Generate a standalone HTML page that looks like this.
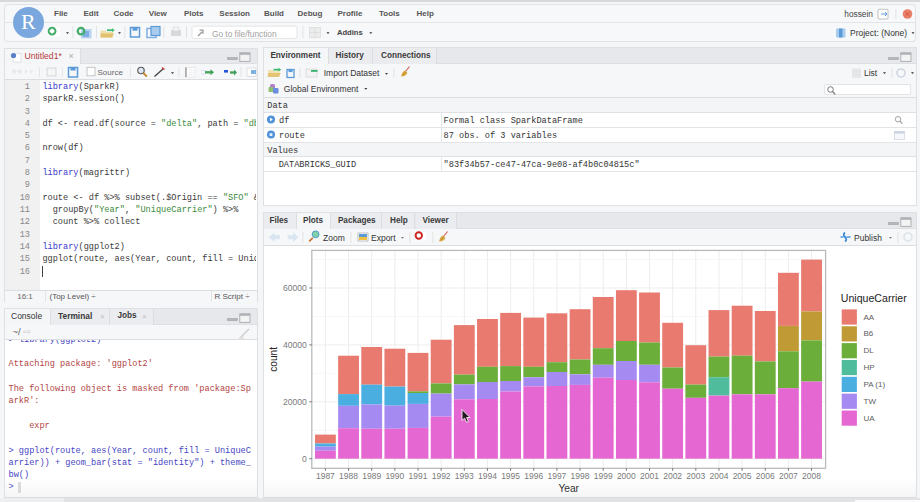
<!DOCTYPE html>
<html><head><meta charset="utf-8">
<style>
*{margin:0;padding:0;box-sizing:border-box}
html,body{width:920px;height:502px;overflow:hidden;background:#f5f6f8;font-family:"Liberation Sans",sans-serif;}
.a{position:absolute}
.t{position:absolute;white-space:nowrap;font-size:8px;line-height:10px;color:#333}
.mono{font-family:"Liberation Mono",monospace;font-size:8.6px;line-height:12.32px;white-space:pre;color:#3a3a3a}
.pane{position:absolute;background:#fff;border:1px solid #dfe0e3}
.tabbar{position:absolute;background:#e7e8eb;border-bottom:1px solid #dedfe2}
.tab{position:absolute;top:0;height:100%;background:#ebecef;border-right:1px solid #dcdde0}
.tab.act{background:#f5f6f8}
.tb{position:absolute;background:#f6f7f9;border-bottom:1px solid #dcdde0}
.kw{color:#3a3acd}
.st{color:#3b8a3b}
.red{color:#b24545}
.blu{color:#4646c4}
.sep{position:absolute;width:1px;background:#d5d6da}
</style></head><body><div id="wrap" style="position:absolute;left:0;top:0;width:920px;height:502px">
<!-- top band -->
<div class="a" style="left:0;top:0;width:920px;height:2px;background:#d8d9dc"></div>
<!-- main toolbar frame -->
<div class="a" style="left:4px;top:4px;width:912px;height:37.5px;background:#f7f8fa;border:1px solid #e1e2e5;border-radius:3px"></div>
<div class="a" style="left:5px;top:22px;width:910px;height:1px;background:#e4e5e8"></div>
<!-- R logo -->
<div class="a" style="left:12.6px;top:6.9px;width:31px;height:31px;border-radius:50%;background:#7aa7dd"></div>
<div class="t" style="left:12.3px;top:8.5px;width:32px;text-align:center;font-family:'Liberation Serif',serif;font-size:22px;line-height:26px;color:#fff">R</div>
<!-- menu -->
<div class="t" style="left:54px;top:8.5px;font-weight:bold;color:#555">File</div>
<div class="t" style="left:83.5px;top:8.5px;font-weight:bold;color:#555">Edit</div>
<div class="t" style="left:113.5px;top:8.5px;font-weight:bold;color:#555">Code</div>
<div class="t" style="left:148.7px;top:8.5px;font-weight:bold;color:#555">View</div>
<div class="t" style="left:183.9px;top:8.5px;font-weight:bold;color:#555">Plots</div>
<div class="t" style="left:219.3px;top:8.5px;font-weight:bold;color:#555">Session</div>
<div class="t" style="left:264px;top:8.5px;font-weight:bold;color:#555">Build</div>
<div class="t" style="left:297.5px;top:8.5px;font-weight:bold;color:#555">Debug</div>
<div class="t" style="left:337.5px;top:8.5px;font-weight:bold;color:#555">Profile</div>
<div class="t" style="left:379px;top:8.5px;font-weight:bold;color:#555">Tools</div>
<div class="t" style="left:416.5px;top:8.5px;font-weight:bold;color:#555">Help</div>
<div class="t" style="left:844.3px;top:9.4px;color:#444;font-size:8.3px">hossein</div>
<!-- toolbar -->

<svg class="a" style="left:0;top:0" width="920" height="45">
 <!-- new file: green plus in white doc -->
 <rect x="49.6" y="27.4" width="10.8" height="8.7" fill="#fff"/>
 <circle cx="52.1" cy="31.1" r="3.3" fill="none" stroke="#43ad6a" stroke-width="2.2"/>
 <path d="M52.1 28.6v5M49.6 31.1h5" stroke="#fff" stroke-width="1"/>
 <path d="M66 32.3h3l-1.5 1.8z" fill="#333"/>
 <rect x="72.5" y="26" width="0.8" height="12" fill="#dcdcdc"/>
 <!-- new project -->
 <rect x="81" y="29" width="10.5" height="9.4" fill="#b7d3ef"/>
 <rect x="83" y="31" width="6" height="6" fill="#7eaee3"/>
 <circle cx="81" cy="31.1" r="3.3" fill="none" stroke="#43ad6a" stroke-width="2.2"/>
 <rect x="96" y="26" width="0.8" height="12" fill="#dcdcdc"/>
 <!-- open -->
 <path d="M100.5 30.5 h5 l1 1.5 h6.5 v5.5 h-12.5z" fill="#efe0a8"/>
 <path d="M100.5 33.5 h13.5 l-2 4 h-11.5z" fill="#e2c270"/>
 <path d="M107 30.2h5.5" stroke="#3dbb6a" stroke-width="1.8"/><path d="M112 28.3l2.8 1.9-2.8 1.9z" fill="#3dbb6a"/>
 <path d="M118 32.3h3l-1.5 1.8z" fill="#333"/>
 <rect x="124.5" y="26" width="0.8" height="12" fill="#dcdcdc"/>
 <!-- save -->
 <rect x="130.5" y="27.5" width="9" height="9.5" fill="none" stroke="#5b9ad8" stroke-width="1.5"/>
 <rect x="132.5" y="27.5" width="5" height="3.2" fill="#5b9ad8"/>
 <!-- save all -->
 <rect x="147" y="28.5" width="9" height="9" fill="none" stroke="#7fb0e3" stroke-width="1.5"/>
 <rect x="151" y="26.5" width="9" height="9" fill="#a9cbed" stroke="#5b9ad8" stroke-width="1.2"/>
 <rect x="163.5" y="26" width="0.8" height="12" fill="#dcdcdc"/>
 <!-- print -->
 <rect x="171" y="30" width="10" height="6" rx="1" fill="#d9d9dc"/>
 <rect x="173" y="27" width="6" height="4" fill="#f2f2f2" stroke="#cfcfcf" stroke-width="0.5"/>
 <rect x="186" y="26" width="0.8" height="12" fill="#dcdcdc"/>
 <!-- goto box -->
 <rect x="192" y="26.2" width="105" height="12.3" rx="2" fill="#fff" stroke="#dedfe2" stroke-width="0.8"/>
 <path d="M198 36 l4 -4 M199.5 30.2 h3.5 v3.5" fill="none" stroke="#9a9a9a" stroke-width="1.3"/>
 <rect x="302.5" y="26" width="0.8" height="12" fill="#dcdcdc"/>
 <!-- grid icon -->
 <rect x="309.5" y="27.5" width="11" height="10" fill="#ececec" stroke="#d6d6d6" stroke-width="0.6"/>
 <path d="M315 27.5v10M309.5 32.5h11" stroke="#d6d6d6" stroke-width="0.6"/>
 <path d="M326.5 32.3h3l-1.5 1.8z" fill="#333"/>
 <path d="M369.3 32.3h3l-1.5 1.8z" fill="#333"/>
 <!-- right side -->
 <rect x="878" y="9.3" width="10" height="9.7" rx="1" fill="#fff" stroke="#b0b0b0" stroke-width="0.8"/>
 <path d="M881 14h6M885 12l2 2-2 2" fill="none" stroke="#5b9ad8" stroke-width="1"/>
 <rect x="895.5" y="9" width="0.8" height="10" fill="#d9d9d9"/>
 <circle cx="907.5" cy="14" r="4.8" fill="#e8806a"/>
 <path d="M905.2 11.7l4.6 4.6M909.8 11.7l-4.6 4.6" stroke="#d9533c" stroke-width="1"/>
 <rect x="836" y="28.5" width="9.5" height="9" rx="1" fill="#a8cdee"/>
 <rect x="839" y="28.5" width="3.5" height="9" fill="#5a9bd8"/>
 <path d="M911.5 32.3h3l-1.5 1.8z" fill="#333"/>
</svg>
<div class="t" style="left:212px;top:28.5px;color:#a0a0a0;font-size:8.3px">Go to file/function</div>
<div class="t" style="left:337px;top:28.3px;font-size:7.6px;font-weight:bold;color:#444">Addins</div>
<div class="t" style="left:850px;top:27.5px;font-size:8.5px;color:#333">Project: (None)</div>


<!-- ================= LEFT: editor ================= -->
<div class="pane" style="left:4px;top:47.5px;width:253.5px;height:254.5px;background:#f7f8fa"></div>
<div class="tabbar" style="left:5px;top:48.5px;width:251.5px;height:15.5px"></div>
<div class="tab act" style="left:5px;top:48.5px;width:75.5px;height:15.5px"></div>

<div class="tb" style="left:5px;top:64px;width:251.5px;height:15.5px"></div>
<div class="a" style="left:5px;top:79.5px;width:251.5px;height:210px;background:#fff"></div>
<div class="a" style="left:5px;top:79.5px;width:34.5px;height:210px;background:#f1f1f2"></div>
<div class="a" style="left:5px;top:289.5px;width:251.5px;height:12.5px;background:#f6f7f9;border-top:1px solid #dcdde0"></div>
<div class="t" style="left:24.5px;top:51px;color:#b43a3a;font-size:8.6px">Untitled1*</div>
<div class="t" style="left:68.5px;top:51px;color:#aaa;font-size:9px">×</div>
<svg class="a" style="left:0;top:40px" width="260" height="40">
 <rect x="13" y="13.5" width="8" height="8.5" fill="#fff" stroke="#ccc" stroke-width="0.5"/>
 <circle cx="13.5" cy="15.5" r="2.6" fill="#5a7fc8"/>
 <path d="M12 31.5l3-2.5v5zM19 29v5l3-2.5z M15 31.5h4" fill="#e8eaef" stroke="#e0e2e6" stroke-width="0.6"/>
 <path d="M25 29v5l3-2.5zM30 29v5l3-2.5z" fill="#e8eaef"/>
 <rect x="39" y="27" width="0.8" height="10" fill="#e0e0e0"/>
 <rect x="47" y="28" width="9" height="8" fill="#f5f5f5" stroke="#c8c8c8" stroke-width="0.7"/>
 <rect x="62" y="27" width="0.8" height="10" fill="#e0e0e0"/>
 <rect x="68.5" y="27.5" width="9" height="9.5" fill="none" stroke="#5b9ad8" stroke-width="1.5"/>
 <rect x="70.5" y="27.5" width="5" height="3" fill="#5b9ad8"/>
 <rect x="87" y="27.3" width="8" height="8.5" fill="#fff" stroke="#b9b9b9" stroke-width="0.8"/>
 <rect x="130" y="27" width="0.8" height="10" fill="#e0e0e0"/>
 <circle cx="141" cy="30.5" r="3.2" fill="#dfe9f3" stroke="#555" stroke-width="1.1"/>
 <path d="M143.3 33l3.5 3.5" stroke="#c9862b" stroke-width="1.8"/>
 <path d="M154.5 36.5l9 -8" stroke="#444" stroke-width="1.4"/>
 <path d="M162 27.5l2.5 2" stroke="#d8433d" stroke-width="1.6"/>
 <path d="M171 32.3h3l-1.5 1.8z" fill="#333"/>
 <rect x="178.5" y="27" width="0.8" height="10" fill="#e0e0e0"/>
 <rect x="185.5" y="27.5" width="9.5" height="9.5" fill="#fff" stroke="#ddd" stroke-width="0.6"/>
 <rect x="185" y="27.5" width="1.8" height="9.5" fill="#aaa"/>
 <path d="M188.5 30h5M188.5 32.3h5M188.5 34.6h5" stroke="#e2e2e2" stroke-width="0.7"/>
 <path d="M201 30.5h5M201 34h5" stroke="#d6dcf0" stroke-width="0.9"/>
 <path d="M205 32.3h6" stroke="#4aa35a" stroke-width="2.4"/><path d="M210.5 29.3l3.5 3-3.5 3z" fill="#3fa05a"/>
 <rect x="224" y="30" width="4" height="2.6" fill="#2255dd"/><path d="M230 32.5h4.5" stroke="#4aa35a" stroke-width="2.4"/><path d="M234 29.5l3 3-3 3z" fill="#3fa05a"/>
 <rect x="240.5" y="27" width="0.8" height="10" fill="#e0e0e0"/>
 <rect x="247" y="28" width="9" height="8.5" fill="#fff" stroke="#ccc" stroke-width="0.6"/>
 <rect x="251" y="30" width="5" height="4" fill="#7faee0"/>
</svg>
<div class="t" style="left:97.5px;top:67.5px;color:#666;font-size:8px">Source</div>
<svg class="a" style="left:226.5px;top:51px" width="26" height="14">
 <rect x="0.5" y="6.5" width="10" height="2.2" fill="#b5b6b9" stroke="#9c9da0" stroke-width="0.5"/>
 <rect x="12.8" y="1.8" width="10.2" height="8.6" fill="#f3f3f4" stroke="#a9aaad" stroke-width="0.9"/>
 <rect x="12.8" y="1.8" width="10.2" height="2" fill="#b0b1b4"/>
</svg>
<div class="a mono" style="left:5px;top:80.9px;width:25px;text-align:right;color:#888">1
2
3
4
5
6
7
8
9
10
11
12
13
14
15
16
</div><div class="a mono" style="left:42.4px;top:80.9px;width:214px;overflow:hidden"><span class="kw">library</span>(SparkR)
sparkR.session()

df &lt;- read.df(source = <span class="st">"delta"</span>, path = <span class="st">"db</span>

nrow(df)

<span class="kw">library</span>(magrittr)

route &lt;- df %&gt;% subset(.$Origin == <span class="st">"SFO"</span> &amp;
  groupBy(<span class="st">"Year"</span>, <span class="st">"UniqueCarrier"</span>) %&gt;%
  count %&gt;% collect

<span class="kw">library</span>(ggplot2)
ggplot(route, aes(Year, count, fill = UniqueC
</div><div class="a" style="left:41.5px;top:266px;width:1.2px;height:10.5px;background:#444"></div><svg class="a" style="left:0;top:289px" width="260" height="14"><rect x="45" y="1" width="0.8" height="12" fill="#dedfe2"/><rect x="211" y="1" width="0.8" height="12" fill="#dedfe2"/></svg>
<div class="t" style="left:5px;top:291.5px;width:40px;text-align:center;font-size:8px;color:#666">16:1</div>
<div class="t" style="left:49.5px;top:291.5px;font-size:8px;color:#555">(Top Level) ÷</div>
<div class="t" style="left:214.5px;top:291.5px;font-size:8px;color:#555">R Script ÷</div>


<!-- ================= LEFT: console ================= -->
<div class="pane" style="left:4px;top:308px;width:253.5px;height:189.5px"></div>

<div class="tabbar" style="left:5px;top:309px;width:251.5px;height:16px"></div>
<div class="tab act" style="left:5px;top:309px;width:46px;height:16px"></div>
<div class="tab" style="left:51px;top:309px;width:59px;height:16px"></div>
<div class="tab" style="left:110px;top:309px;width:44px;height:16px"></div>
<div class="t" style="left:11px;top:311.3px;font-size:8.5px;color:#333">Console</div>
<div class="t" style="left:58px;top:311.3px;font-size:8.4px;font-weight:bold;color:#3a3a3a">Terminal</div>
<div class="t" style="left:100px;top:312px;font-size:8px;color:#bbb">×</div>
<div class="t" style="left:117.5px;top:311.3px;font-size:8.2px;font-weight:bold;color:#3a3a3a">Jobs</div>
<div class="t" style="left:142px;top:312px;font-size:8px;color:#bbb">×</div>
<svg class="a" style="left:226.5px;top:311.5px" width="26" height="14">
 <rect x="0.5" y="6.5" width="10" height="2.2" fill="#b5b6b9" stroke="#9c9da0" stroke-width="0.5"/>
 <rect x="12.8" y="1.8" width="10.2" height="8.6" fill="#f3f3f4" stroke="#a9aaad" stroke-width="0.9"/>
 <rect x="12.8" y="1.8" width="10.2" height="2" fill="#b0b1b4"/>
</svg>
<div class="tb" style="left:5px;top:325px;width:251.5px;height:15px"></div>
<div class="t" style="left:12.5px;top:327.3px;font-size:9.6px;color:#666">~/ <span style="color:#ccc">⇨</span></div>
<svg class="a" style="left:238px;top:327px" width="14" height="12"><path d="M2 11l9-9" stroke="#ccc" stroke-width="1.2"/><path d="M1 11h5" stroke="#ddd" stroke-width="1.5"/></svg>
<div class="a" style="left:5px;top:340px;width:251.5px;height:157px;background:#fff;overflow:hidden"></div>
<div class="a" style="left:5px;top:340px;width:251.5px;height:157px;overflow:hidden"><div class="a mono" style="left:3.5px;top:-6.3px"><span class="blu">&gt; library(ggplot2)</span>

<span class="red">Attaching package: 'ggplot2'</span>

<span class="red">The following object is masked from 'package:Sp
arkR':</span>

<span class="red">    expr</span>

<span class="blu">&gt; ggplot(route, aes(Year, count, fill = UniqueC
arrier)) + geom_bar(stat = "identity") + theme_
bw()
&gt; </span></div></div><div class="a" style="left:18.3px;top:481.5px;width:2.4px;height:11px;background:#dcdcdc"></div>

<!-- ================= RIGHT: env ================= -->
<div class="pane" style="left:263px;top:47px;width:653.5px;height:158.5px"></div>

<div class="tabbar" style="left:264px;top:48px;width:651.5px;height:15.8px"></div>
<div class="tab act" style="left:264px;top:48px;width:65.3px;height:15.8px"></div>
<div class="tab" style="left:329.3px;top:48px;width:43.4px;height:15.8px"></div>
<div class="tab" style="left:372.7px;top:48px;width:64px;height:15.8px"></div>
<div class="t" style="left:270.4px;top:51px;font-size:8.2px;font-weight:bold;color:#3a3a3a">Environment</div>
<div class="t" style="left:335.5px;top:51px;font-size:8.2px;font-weight:bold;color:#3a3a3a">History</div>
<div class="t" style="left:381px;top:51px;font-size:8.2px;font-weight:bold;color:#3a3a3a">Connections</div>
<svg class="a" style="left:887.5px;top:51px" width="26" height="14">
 <rect x="0.5" y="6.5" width="10" height="2.2" fill="#b5b6b9" stroke="#9c9da0" stroke-width="0.5"/>
 <rect x="12.8" y="1.8" width="10.2" height="8.6" fill="#f3f3f4" stroke="#a9aaad" stroke-width="0.9"/>
 <rect x="12.8" y="1.8" width="10.2" height="2" fill="#b0b1b4"/>
</svg>
<div class="tb" style="left:264px;top:63.8px;width:651.5px;height:16.3px"></div>
<div class="a" style="left:264px;top:79.3px;width:651.5px;height:18.6px;background:#f6f7f9;border-bottom:1px solid #dcdde0"></div>
<svg class="a" style="left:0;top:57.5px" width="920" height="40">
 <path d="M268 12 h4.5 l1 1.3 h6 v5.5 h-11.5z" fill="#efe2ae"/>
 <path d="M267.8 15 h13 l-2 4 h-11z" fill="#e3c575"/>
 <path d="M273.5 11.7h5.5" stroke="#3dbb6a" stroke-width="1.8"/><path d="M278.5 9.8l2.8 1.9-2.8 1.9z" fill="#3dbb6a"/>
 <rect x="287" y="11.5" width="7" height="8" fill="none" stroke="#5b9ad8" stroke-width="1.3"/>
 <rect x="288.5" y="11.5" width="4" height="2.6" fill="#5b9ad8"/>
 <rect x="299.5" y="10" width="0.8" height="10" fill="#dedede"/>
 <rect x="306" y="11" width="11" height="8" fill="#f3f3f3" stroke="#ccc" stroke-width="0.6"/>
 <rect x="311" y="12" width="6.5" height="1.8" fill="#34b06a"/>
 <path d="M385 15h3l-1.5 1.8z" fill="#333"/>
 <rect x="393.5" y="10" width="0.8" height="10" fill="#dedede"/>
 <path d="M409.5 8.5 l-4 5" stroke="#d25a4a" stroke-width="1.1"/>
 <path d="M401 18.5 q0.5 -4 3.5 -6 l3 2.5 q-2 3.5 -6.5 3.5z" fill="#d8a840"/>
 <path d="M403 17 l3 -3.5" stroke="#b07f2a" stroke-width="0.7"/>
 <rect x="852.5" y="11" width="8" height="8.5" fill="#e9e9ea" stroke="#dcdcdc" stroke-width="0.5"/>
 <path d="M852.5 13.8h8M852.5 16.6h8" stroke="#d8d8d8" stroke-width="0.5"/>
 <path d="M883 14.3h3l-1.5 1.8z" fill="#333"/>
 <rect x="891.5" y="10" width="0.8" height="10" fill="#dedede"/>
 <circle cx="901" cy="15" r="4" fill="none" stroke="#cfd6e2" stroke-width="1.6"/>
 <path d="M911 14.3h3l-1.5 1.8z" fill="#333"/>
 <!-- global env icon -->
 <rect x="270" y="26" width="5" height="6" rx="1.5" fill="#b17ed0"/>
 <rect x="268.5" y="29" width="5" height="5" rx="1" fill="#8bc170"/>
 <rect x="273" y="30" width="5.5" height="5.5" rx="1" fill="#6b8ee0"/>
 <path d="M364.3 30h3l-1.5 1.8z" fill="#333"/>
</svg>
<div class="t" style="left:323.7px;top:67.5px;font-size:8.5px;color:#333">Import Dataset</div>
<div class="t" style="left:864px;top:67.5px;font-size:8.5px;color:#333">List</div>
<div class="t" style="left:283.8px;top:83.5px;font-size:8.5px;color:#333">Global Environment</div>
<div class="a" style="left:823.8px;top:83.8px;width:87.5px;height:11.3px;background:#fff;border:1px solid #e2e3e6;border-radius:2px"></div>
<svg class="a" style="left:826px;top:84.5px" width="12" height="11"><circle cx="4.5" cy="4.5" r="2.8" fill="none" stroke="#777" stroke-width="1"/><path d="M6.5 6.5l2.8 2.8" stroke="#777" stroke-width="1.2"/></svg>
<div class="a" style="left:264px;top:97.9px;width:651.5px;height:15.3px;background:#f4f5f7;border-bottom:1px solid #e0e1e4"></div>
<div class="a" style="left:264px;top:113.2px;width:651.5px;height:14.8px;background:#fff;border-bottom:1px solid #e3e4e7"></div>
<div class="a" style="left:264px;top:127.8px;width:651.5px;height:15.2px;background:#fff;border-bottom:1px solid #e3e4e7"></div>
<div class="a" style="left:264px;top:143px;width:651.5px;height:14.2px;background:#f4f5f7;border-bottom:1px solid #e0e1e4"></div>
<div class="a" style="left:264px;top:157.2px;width:651.5px;height:14.5px;background:#fff;border-bottom:1px solid #e3e4e7"></div>
<div class="a" style="left:440.5px;top:112.3px;width:1px;height:30.7px;background:#e6e7ea"></div>
<div class="a" style="left:440.5px;top:157.2px;width:1px;height:14.5px;background:#e6e7ea"></div>
<svg class="a" style="left:260px;top:110px" width="660" height="40">
 <circle cx="11" cy="9.5" r="4" fill="#4e92da"/>
 <path d="M10 7.6v3.8l2.8-1.9z" fill="#fff"/>
 <circle cx="11" cy="24.6" r="4" fill="#4e92da"/>
 <rect x="9.6" y="23.2" width="2.8" height="2.8" fill="#e8f0fa"/>
 <circle cx="638" cy="9.2" r="2.7" fill="none" stroke="#999" stroke-width="0.9"/>
 <path d="M640 11.2l2.4 2.4" stroke="#999" stroke-width="1.1"/>
 <rect x="634.5" y="21.5" width="10" height="8" fill="#f5f7fb" stroke="#c9d3e0" stroke-width="0.7"/>
 <rect x="634.5" y="21.5" width="10" height="2" fill="#c9d3e0"/>
</svg>
<div class="a mono" style="left:267.3px;top:99.8px;color:#333">Data</div>
<div class="a mono" style="left:279px;top:114.8px;color:#333">df</div>
<div class="a mono" style="left:279px;top:129.8px;color:#333">route</div>
<div class="a mono" style="left:267.3px;top:144.8px;color:#333">Values</div>
<div class="a mono" style="left:278.7px;top:159.3px;color:#333">DATABRICKS_GUID</div>
<div class="a mono" style="left:443.6px;top:114.8px;color:#333">Formal class SparkDataFrame</div>
<div class="a mono" style="left:443.6px;top:129.8px;color:#333">87 obs. of 3 variables</div>
<div class="a mono" style="left:443.6px;top:159.3px;color:#333">"83f34b57-ce47-47ca-9e08-af4b0c04815c"</div>


<!-- ================= RIGHT: plots ================= -->
<div class="pane" style="left:263px;top:212px;width:653.5px;height:285.5px"></div>

<div class="tabbar" style="left:264px;top:212.8px;width:651.5px;height:16.2px"></div>
<div class="tab" style="left:264px;top:212.8px;width:32.8px;height:16.2px"></div>
<div class="tab act" style="left:296.8px;top:212.8px;width:34.2px;height:16.2px"></div>
<div class="tab" style="left:331px;top:212.8px;width:51.4px;height:16.2px"></div>
<div class="tab" style="left:382.4px;top:212.8px;width:33.1px;height:16.2px"></div>
<div class="tab" style="left:415.5px;top:212.8px;width:41.1px;height:16.2px"></div>
<div class="t" style="left:269.4px;top:216px;font-size:8.2px;font-weight:bold;color:#3a3a3a">Files</div>
<div class="t" style="left:303px;top:216px;font-size:8.2px;font-weight:bold;color:#3a3a3a">Plots</div>
<div class="t" style="left:337.9px;top:216px;font-size:8.2px;font-weight:bold;color:#3a3a3a">Packages</div>
<div class="t" style="left:390px;top:216px;font-size:8.2px;font-weight:bold;color:#3a3a3a">Help</div>
<div class="t" style="left:422.4px;top:216px;font-size:8.2px;font-weight:bold;color:#3a3a3a">Viewer</div>
<svg class="a" style="left:887.5px;top:216px" width="26" height="14">
 <rect x="0.5" y="6.5" width="10" height="2.2" fill="#b5b6b9" stroke="#9c9da0" stroke-width="0.5"/>
 <rect x="12.8" y="1.8" width="10.2" height="8.6" fill="#f3f3f4" stroke="#a9aaad" stroke-width="0.9"/>
 <rect x="12.8" y="1.8" width="10.2" height="2" fill="#b0b1b4"/>
</svg>
<div class="tb" style="left:264px;top:229px;width:651.5px;height:17px"></div>
<div class="a" style="left:264px;top:246px;width:651.5px;height:251px;background:#fff"></div>
<svg class="a" style="left:0;top:225px" width="920" height="22">
 <path d="M269.5 12.2l4.5-4v2.5h5.5v3h-5.5v2.5z" fill="#d9e6f2" stroke="#d9e6f2" stroke-width="1" stroke-linejoin="round"/>
 <path d="M298 12.2l-4.5-4v2.5h-5.5v3h5.5v2.5z" fill="#d9e6f2" stroke="#d9e6f2" stroke-width="1" stroke-linejoin="round"/>
 <rect x="302.5" y="7" width="0.8" height="11" fill="#dedede"/>
 <path d="M312.8 12.8l-3.6 3.6" stroke="#c9773a" stroke-width="1.8"/>
 <circle cx="315.6" cy="9.3" r="3.4" fill="#7fd3a8" stroke="#4a90c8" stroke-width="0.9"/>
 <rect x="350.5" y="7" width="0.8" height="11" fill="#dedede"/>
 <rect x="358" y="8" width="10" height="8" fill="#fff" stroke="#999" stroke-width="0.6"/>
 <rect x="359" y="12" width="8" height="3" fill="#f0c040"/>
 <rect x="359" y="9" width="8" height="3" fill="#5b9ad8"/>
 <path d="M401 12h3l-1.5 1.8z" fill="#777"/>
 <rect x="409.5" y="7" width="0.8" height="11" fill="#dedede"/>
 <rect x="419" y="7.5" width="7" height="8" fill="#fff"/>
 <circle cx="418.8" cy="10.5" r="3.2" fill="#fff" stroke="#cc2222" stroke-width="1.9"/>
 <rect x="432.5" y="7" width="0.8" height="11" fill="#dedede"/>
 <path d="M447.5 6.5 l-4 5" stroke="#d25a4a" stroke-width="1.1"/>
 <path d="M439 16.5 q0.5 -4 3.5 -6 l3 2.5 q-2 3.5 -6.5 3.5z" fill="#d8a840"/>
 <path d="M441 15 l3 -3.5" stroke="#b07f2a" stroke-width="0.7"/>
 <path d="M840.5 12 h3 M846.5 12 h4" stroke="#4d9ae0" stroke-width="1.6"/>
 <path d="M845 7.5 q-2.5 2 0 4.5 q2.5 2.5 0 4.5" fill="none" stroke="#3d8ad6" stroke-width="1.8"/>
 <path d="M889 12h3l-1.5 1.8z" fill="#777"/>
 <rect x="897.5" y="7" width="0.8" height="11" fill="#dedede"/>
 <circle cx="908" cy="12" r="4" fill="none" stroke="#dde3ea" stroke-width="1.6"/>
</svg>
<div class="t" style="left:323px;top:232.5px;font-size:8.5px;color:#333">Zoom</div>
<div class="t" style="left:371px;top:232.5px;font-size:8.5px;color:#333">Export</div>
<div class="t" style="left:854px;top:232.5px;font-size:8.5px;color:#333">Publish</div>

<svg width="920" height="502" style="position:absolute;left:0;top:0">
<rect x="311.8" y="250.4" width="513.8" height="217.9" fill="#ffffff"/>
<line x1="311.8" x2="825.6" y1="430.25" y2="430.25" stroke="#f4f4f4" stroke-width="0.7"/>
<line x1="311.8" x2="825.6" y1="373.35" y2="373.35" stroke="#f4f4f4" stroke-width="0.7"/>
<line x1="311.8" x2="825.6" y1="316.45" y2="316.45" stroke="#f4f4f4" stroke-width="0.7"/>
<line x1="311.8" x2="825.6" y1="259.55" y2="259.55" stroke="#f4f4f4" stroke-width="0.7"/>
<line x1="311.8" x2="825.6" y1="458.70" y2="458.70" stroke="#ededed" stroke-width="1"/>
<line x1="311.8" x2="825.6" y1="401.80" y2="401.80" stroke="#ededed" stroke-width="1"/>
<line x1="311.8" x2="825.6" y1="344.90" y2="344.90" stroke="#ededed" stroke-width="1"/>
<line x1="311.8" x2="825.6" y1="288.00" y2="288.00" stroke="#ededed" stroke-width="1"/>
<line x1="325.40" x2="325.40" y1="250.4" y2="468.3" stroke="#ededed" stroke-width="1"/>
<line x1="348.55" x2="348.55" y1="250.4" y2="468.3" stroke="#ededed" stroke-width="1"/>
<line x1="371.70" x2="371.70" y1="250.4" y2="468.3" stroke="#ededed" stroke-width="1"/>
<line x1="394.85" x2="394.85" y1="250.4" y2="468.3" stroke="#ededed" stroke-width="1"/>
<line x1="418.00" x2="418.00" y1="250.4" y2="468.3" stroke="#ededed" stroke-width="1"/>
<line x1="441.15" x2="441.15" y1="250.4" y2="468.3" stroke="#ededed" stroke-width="1"/>
<line x1="464.30" x2="464.30" y1="250.4" y2="468.3" stroke="#ededed" stroke-width="1"/>
<line x1="487.45" x2="487.45" y1="250.4" y2="468.3" stroke="#ededed" stroke-width="1"/>
<line x1="510.60" x2="510.60" y1="250.4" y2="468.3" stroke="#ededed" stroke-width="1"/>
<line x1="533.75" x2="533.75" y1="250.4" y2="468.3" stroke="#ededed" stroke-width="1"/>
<line x1="556.90" x2="556.90" y1="250.4" y2="468.3" stroke="#ededed" stroke-width="1"/>
<line x1="580.05" x2="580.05" y1="250.4" y2="468.3" stroke="#ededed" stroke-width="1"/>
<line x1="603.20" x2="603.20" y1="250.4" y2="468.3" stroke="#ededed" stroke-width="1"/>
<line x1="626.35" x2="626.35" y1="250.4" y2="468.3" stroke="#ededed" stroke-width="1"/>
<line x1="649.50" x2="649.50" y1="250.4" y2="468.3" stroke="#ededed" stroke-width="1"/>
<line x1="672.65" x2="672.65" y1="250.4" y2="468.3" stroke="#ededed" stroke-width="1"/>
<line x1="695.80" x2="695.80" y1="250.4" y2="468.3" stroke="#ededed" stroke-width="1"/>
<line x1="718.95" x2="718.95" y1="250.4" y2="468.3" stroke="#ededed" stroke-width="1"/>
<line x1="742.10" x2="742.10" y1="250.4" y2="468.3" stroke="#ededed" stroke-width="1"/>
<line x1="765.25" x2="765.25" y1="250.4" y2="468.3" stroke="#ededed" stroke-width="1"/>
<line x1="788.40" x2="788.40" y1="250.4" y2="468.3" stroke="#ededed" stroke-width="1"/>
<line x1="811.55" x2="811.55" y1="250.4" y2="468.3" stroke="#ededed" stroke-width="1"/>
<rect x="314.99" y="434.60" width="20.83" height="8.90" fill="#e97a70"/>
<rect x="314.99" y="443.50" width="20.83" height="3.10" fill="#4aafe0"/>
<rect x="314.99" y="446.60" width="20.83" height="4.10" fill="#a58af2"/>
<rect x="314.99" y="450.70" width="20.83" height="8.00" fill="#e568d2"/>
<rect x="338.14" y="355.70" width="20.83" height="38.40" fill="#e97a70"/>
<rect x="338.14" y="394.10" width="20.83" height="11.70" fill="#4aafe0"/>
<rect x="338.14" y="405.80" width="20.83" height="22.40" fill="#a58af2"/>
<rect x="338.14" y="428.20" width="20.83" height="30.50" fill="#e568d2"/>
<rect x="361.29" y="347.00" width="20.83" height="37.70" fill="#e97a70"/>
<rect x="361.29" y="384.70" width="20.83" height="19.80" fill="#4aafe0"/>
<rect x="361.29" y="404.50" width="20.83" height="24.20" fill="#a58af2"/>
<rect x="361.29" y="428.70" width="20.83" height="30.00" fill="#e568d2"/>
<rect x="384.44" y="348.70" width="20.83" height="37.90" fill="#e97a70"/>
<rect x="384.44" y="386.60" width="20.83" height="19.00" fill="#4aafe0"/>
<rect x="384.44" y="405.60" width="20.83" height="23.10" fill="#a58af2"/>
<rect x="384.44" y="428.70" width="20.83" height="30.00" fill="#e568d2"/>
<rect x="407.59" y="352.90" width="20.83" height="38.40" fill="#e97a70"/>
<rect x="407.59" y="391.30" width="20.83" height="1.70" fill="#6bae3a"/>
<rect x="407.59" y="393.00" width="20.83" height="10.90" fill="#4aafe0"/>
<rect x="407.59" y="403.90" width="20.83" height="24.00" fill="#a58af2"/>
<rect x="407.59" y="427.90" width="20.83" height="30.80" fill="#e568d2"/>
<rect x="430.74" y="339.70" width="20.83" height="43.70" fill="#e97a70"/>
<rect x="430.74" y="383.40" width="20.83" height="10.20" fill="#6bae3a"/>
<rect x="430.74" y="393.60" width="20.83" height="23.00" fill="#a58af2"/>
<rect x="430.74" y="416.60" width="20.83" height="42.10" fill="#e568d2"/>
<rect x="453.89" y="325.10" width="20.83" height="49.50" fill="#e97a70"/>
<rect x="453.89" y="374.60" width="20.83" height="9.80" fill="#6bae3a"/>
<rect x="453.89" y="384.40" width="20.83" height="14.90" fill="#a58af2"/>
<rect x="453.89" y="399.30" width="20.83" height="59.40" fill="#e568d2"/>
<rect x="477.04" y="319.00" width="20.83" height="47.80" fill="#e97a70"/>
<rect x="477.04" y="366.80" width="20.83" height="15.20" fill="#6bae3a"/>
<rect x="477.04" y="382.00" width="20.83" height="17.00" fill="#a58af2"/>
<rect x="477.04" y="399.00" width="20.83" height="59.70" fill="#e568d2"/>
<rect x="500.19" y="312.90" width="20.83" height="53.20" fill="#e97a70"/>
<rect x="500.19" y="366.10" width="20.83" height="14.90" fill="#6bae3a"/>
<rect x="500.19" y="381.00" width="20.83" height="10.50" fill="#a58af2"/>
<rect x="500.19" y="391.50" width="20.83" height="67.20" fill="#e568d2"/>
<rect x="523.34" y="317.60" width="20.83" height="49.20" fill="#e97a70"/>
<rect x="523.34" y="366.80" width="20.83" height="10.50" fill="#6bae3a"/>
<rect x="523.34" y="377.30" width="20.83" height="9.10" fill="#a58af2"/>
<rect x="523.34" y="386.40" width="20.83" height="72.30" fill="#e568d2"/>
<rect x="546.49" y="313.30" width="20.83" height="48.90" fill="#e97a70"/>
<rect x="546.49" y="362.20" width="20.83" height="9.80" fill="#6bae3a"/>
<rect x="546.49" y="372.00" width="20.83" height="14.00" fill="#a58af2"/>
<rect x="546.49" y="386.00" width="20.83" height="72.70" fill="#e568d2"/>
<rect x="569.64" y="309.20" width="20.83" height="50.30" fill="#e97a70"/>
<rect x="569.64" y="359.50" width="20.83" height="14.80" fill="#6bae3a"/>
<rect x="569.64" y="374.30" width="20.83" height="10.60" fill="#a58af2"/>
<rect x="569.64" y="384.90" width="20.83" height="73.80" fill="#e568d2"/>
<rect x="592.79" y="297.00" width="20.83" height="51.20" fill="#e97a70"/>
<rect x="592.79" y="348.20" width="20.83" height="16.60" fill="#6bae3a"/>
<rect x="592.79" y="364.80" width="20.83" height="12.90" fill="#a58af2"/>
<rect x="592.79" y="377.70" width="20.83" height="81.00" fill="#e568d2"/>
<rect x="615.94" y="290.20" width="20.83" height="50.80" fill="#e97a70"/>
<rect x="615.94" y="341.00" width="20.83" height="20.00" fill="#6bae3a"/>
<rect x="615.94" y="361.00" width="20.83" height="19.00" fill="#a58af2"/>
<rect x="615.94" y="380.00" width="20.83" height="78.70" fill="#e568d2"/>
<rect x="639.09" y="292.50" width="20.83" height="50.00" fill="#e97a70"/>
<rect x="639.09" y="342.50" width="20.83" height="22.30" fill="#6bae3a"/>
<rect x="639.09" y="364.80" width="20.83" height="17.50" fill="#a58af2"/>
<rect x="639.09" y="382.30" width="20.83" height="76.40" fill="#e568d2"/>
<rect x="662.24" y="322.80" width="20.83" height="44.70" fill="#e97a70"/>
<rect x="662.24" y="367.50" width="20.83" height="21.20" fill="#6bae3a"/>
<rect x="662.24" y="388.70" width="20.83" height="70.00" fill="#e568d2"/>
<rect x="685.39" y="345.20" width="20.83" height="39.40" fill="#e97a70"/>
<rect x="685.39" y="384.60" width="20.83" height="13.20" fill="#6bae3a"/>
<rect x="685.39" y="397.80" width="20.83" height="60.90" fill="#e568d2"/>
<rect x="708.54" y="310.10" width="20.83" height="46.50" fill="#e97a70"/>
<rect x="708.54" y="356.60" width="20.83" height="20.60" fill="#6bae3a"/>
<rect x="708.54" y="377.20" width="20.83" height="18.40" fill="#4fbd9c"/>
<rect x="708.54" y="395.60" width="20.83" height="63.10" fill="#e568d2"/>
<rect x="731.69" y="305.70" width="20.83" height="50.00" fill="#e97a70"/>
<rect x="731.69" y="355.70" width="20.83" height="38.60" fill="#6bae3a"/>
<rect x="731.69" y="394.30" width="20.83" height="64.40" fill="#e568d2"/>
<rect x="754.84" y="311.00" width="20.83" height="50.40" fill="#e97a70"/>
<rect x="754.84" y="361.40" width="20.83" height="32.90" fill="#6bae3a"/>
<rect x="754.84" y="394.30" width="20.83" height="64.40" fill="#e568d2"/>
<rect x="777.99" y="272.80" width="20.83" height="53.10" fill="#e97a70"/>
<rect x="777.99" y="325.90" width="20.83" height="25.40" fill="#c09a35"/>
<rect x="777.99" y="351.30" width="20.83" height="36.90" fill="#6bae3a"/>
<rect x="777.99" y="388.20" width="20.83" height="70.50" fill="#e568d2"/>
<rect x="801.14" y="259.60" width="20.83" height="51.80" fill="#e97a70"/>
<rect x="801.14" y="311.40" width="20.83" height="29.00" fill="#c09a35"/>
<rect x="801.14" y="340.40" width="20.83" height="41.20" fill="#6bae3a"/>
<rect x="801.14" y="381.60" width="20.83" height="77.10" fill="#e568d2"/>
<rect x="311.8" y="250.4" width="513.8" height="217.9" fill="none" stroke="#b9babd" stroke-width="1.3"/>
<line x1="309.3" x2="311.8" y1="458.70" y2="458.70" stroke="#555" stroke-width="0.8"/>
<text x="306.8" y="461.80" text-anchor="end" font-family="Liberation Sans" font-size="8.6" fill="#7a7a7a">0</text>
<line x1="309.3" x2="311.8" y1="401.80" y2="401.80" stroke="#555" stroke-width="0.8"/>
<text x="306.8" y="404.90" text-anchor="end" font-family="Liberation Sans" font-size="8.6" fill="#7a7a7a">20000</text>
<line x1="309.3" x2="311.8" y1="344.90" y2="344.90" stroke="#555" stroke-width="0.8"/>
<text x="306.8" y="348.00" text-anchor="end" font-family="Liberation Sans" font-size="8.6" fill="#7a7a7a">40000</text>
<line x1="309.3" x2="311.8" y1="288.00" y2="288.00" stroke="#555" stroke-width="0.8"/>
<text x="306.8" y="291.10" text-anchor="end" font-family="Liberation Sans" font-size="8.6" fill="#7a7a7a">60000</text>
<line x1="325.40" x2="325.40" y1="468.3" y2="470.8" stroke="#555" stroke-width="0.8"/>
<text x="325.40" y="479.3" text-anchor="middle" font-family="Liberation Sans" font-size="8.5" fill="#7a7a7a">1987</text>
<line x1="348.55" x2="348.55" y1="468.3" y2="470.8" stroke="#555" stroke-width="0.8"/>
<text x="348.55" y="479.3" text-anchor="middle" font-family="Liberation Sans" font-size="8.5" fill="#7a7a7a">1988</text>
<line x1="371.70" x2="371.70" y1="468.3" y2="470.8" stroke="#555" stroke-width="0.8"/>
<text x="371.70" y="479.3" text-anchor="middle" font-family="Liberation Sans" font-size="8.5" fill="#7a7a7a">1989</text>
<line x1="394.85" x2="394.85" y1="468.3" y2="470.8" stroke="#555" stroke-width="0.8"/>
<text x="394.85" y="479.3" text-anchor="middle" font-family="Liberation Sans" font-size="8.5" fill="#7a7a7a">1990</text>
<line x1="418.00" x2="418.00" y1="468.3" y2="470.8" stroke="#555" stroke-width="0.8"/>
<text x="418.00" y="479.3" text-anchor="middle" font-family="Liberation Sans" font-size="8.5" fill="#7a7a7a">1991</text>
<line x1="441.15" x2="441.15" y1="468.3" y2="470.8" stroke="#555" stroke-width="0.8"/>
<text x="441.15" y="479.3" text-anchor="middle" font-family="Liberation Sans" font-size="8.5" fill="#7a7a7a">1992</text>
<line x1="464.30" x2="464.30" y1="468.3" y2="470.8" stroke="#555" stroke-width="0.8"/>
<text x="464.30" y="479.3" text-anchor="middle" font-family="Liberation Sans" font-size="8.5" fill="#7a7a7a">1993</text>
<line x1="487.45" x2="487.45" y1="468.3" y2="470.8" stroke="#555" stroke-width="0.8"/>
<text x="487.45" y="479.3" text-anchor="middle" font-family="Liberation Sans" font-size="8.5" fill="#7a7a7a">1994</text>
<line x1="510.60" x2="510.60" y1="468.3" y2="470.8" stroke="#555" stroke-width="0.8"/>
<text x="510.60" y="479.3" text-anchor="middle" font-family="Liberation Sans" font-size="8.5" fill="#7a7a7a">1995</text>
<line x1="533.75" x2="533.75" y1="468.3" y2="470.8" stroke="#555" stroke-width="0.8"/>
<text x="533.75" y="479.3" text-anchor="middle" font-family="Liberation Sans" font-size="8.5" fill="#7a7a7a">1996</text>
<line x1="556.90" x2="556.90" y1="468.3" y2="470.8" stroke="#555" stroke-width="0.8"/>
<text x="556.90" y="479.3" text-anchor="middle" font-family="Liberation Sans" font-size="8.5" fill="#7a7a7a">1997</text>
<line x1="580.05" x2="580.05" y1="468.3" y2="470.8" stroke="#555" stroke-width="0.8"/>
<text x="580.05" y="479.3" text-anchor="middle" font-family="Liberation Sans" font-size="8.5" fill="#7a7a7a">1998</text>
<line x1="603.20" x2="603.20" y1="468.3" y2="470.8" stroke="#555" stroke-width="0.8"/>
<text x="603.20" y="479.3" text-anchor="middle" font-family="Liberation Sans" font-size="8.5" fill="#7a7a7a">1999</text>
<line x1="626.35" x2="626.35" y1="468.3" y2="470.8" stroke="#555" stroke-width="0.8"/>
<text x="626.35" y="479.3" text-anchor="middle" font-family="Liberation Sans" font-size="8.5" fill="#7a7a7a">2000</text>
<line x1="649.50" x2="649.50" y1="468.3" y2="470.8" stroke="#555" stroke-width="0.8"/>
<text x="649.50" y="479.3" text-anchor="middle" font-family="Liberation Sans" font-size="8.5" fill="#7a7a7a">2001</text>
<line x1="672.65" x2="672.65" y1="468.3" y2="470.8" stroke="#555" stroke-width="0.8"/>
<text x="672.65" y="479.3" text-anchor="middle" font-family="Liberation Sans" font-size="8.5" fill="#7a7a7a">2002</text>
<line x1="695.80" x2="695.80" y1="468.3" y2="470.8" stroke="#555" stroke-width="0.8"/>
<text x="695.80" y="479.3" text-anchor="middle" font-family="Liberation Sans" font-size="8.5" fill="#7a7a7a">2003</text>
<line x1="718.95" x2="718.95" y1="468.3" y2="470.8" stroke="#555" stroke-width="0.8"/>
<text x="718.95" y="479.3" text-anchor="middle" font-family="Liberation Sans" font-size="8.5" fill="#7a7a7a">2004</text>
<line x1="742.10" x2="742.10" y1="468.3" y2="470.8" stroke="#555" stroke-width="0.8"/>
<text x="742.10" y="479.3" text-anchor="middle" font-family="Liberation Sans" font-size="8.5" fill="#7a7a7a">2005</text>
<line x1="765.25" x2="765.25" y1="468.3" y2="470.8" stroke="#555" stroke-width="0.8"/>
<text x="765.25" y="479.3" text-anchor="middle" font-family="Liberation Sans" font-size="8.5" fill="#7a7a7a">2006</text>
<line x1="788.40" x2="788.40" y1="468.3" y2="470.8" stroke="#555" stroke-width="0.8"/>
<text x="788.40" y="479.3" text-anchor="middle" font-family="Liberation Sans" font-size="8.5" fill="#7a7a7a">2007</text>
<line x1="811.55" x2="811.55" y1="468.3" y2="470.8" stroke="#555" stroke-width="0.8"/>
<text x="811.55" y="479.3" text-anchor="middle" font-family="Liberation Sans" font-size="8.5" fill="#7a7a7a">2008</text>
<text x="568.70" y="492" text-anchor="middle" font-family="Liberation Sans" font-size="10.2" fill="#222">Year</text>
<text transform="translate(277,359.35) rotate(-90)" text-anchor="middle" font-family="Liberation Sans" font-size="10.2" fill="#222">count</text>
<text x="840.8" y="302" font-family="Liberation Sans" font-size="10.6" fill="#222">UniqueCarrier</text>
<rect x="841.7" y="309.40" width="15.2" height="15.2" fill="#e97a70"/>
<text x="863.5" y="319.60" font-family="Liberation Sans" font-size="8" fill="#606060">AA</text>
<rect x="841.7" y="326.25" width="15.2" height="15.2" fill="#c09a35"/>
<text x="863.5" y="336.45" font-family="Liberation Sans" font-size="8" fill="#606060">B6</text>
<rect x="841.7" y="343.10" width="15.2" height="15.2" fill="#6bae3a"/>
<text x="863.5" y="353.30" font-family="Liberation Sans" font-size="8" fill="#606060">DL</text>
<rect x="841.7" y="359.95" width="15.2" height="15.2" fill="#4fbd9c"/>
<text x="863.5" y="370.15" font-family="Liberation Sans" font-size="8" fill="#606060">HP</text>
<rect x="841.7" y="376.80" width="15.2" height="15.2" fill="#4aafe0"/>
<text x="863.5" y="387.00" font-family="Liberation Sans" font-size="8" fill="#606060">PA (1)</text>
<rect x="841.7" y="393.65" width="15.2" height="15.2" fill="#a58af2"/>
<text x="863.5" y="403.85" font-family="Liberation Sans" font-size="8" fill="#606060">TW</text>
<rect x="841.7" y="410.50" width="15.2" height="15.2" fill="#e568d2"/>
<text x="863.5" y="420.70" font-family="Liberation Sans" font-size="8" fill="#606060">UA</text>
</svg>
<svg class="a" style="left:460px;top:408px" width="14" height="16">
 <path d="M2 1.5 L2 12.5 L4.6 10.2 L6.5 14.3 L8.4 13.4 L6.6 9.5 L10 9.5 Z" fill="#111" stroke="#fff" stroke-width="0.9" stroke-linejoin="round" opacity="0.92"/>
</svg>
<div class="a" style="left:5px;top:478px;width:251.5px;height:19.5px;background:linear-gradient(rgba(200,200,205,0),rgba(200,200,205,0.18))"></div>
<div class="a" style="left:264px;top:478px;width:651.5px;height:19.5px;background:linear-gradient(rgba(200,200,205,0),rgba(200,200,205,0.18))"></div>
<div class="a" style="left:0;top:497.5px;width:920px;height:5px;background:#e2e3e5"></div>
<div class="a" style="left:0;top:498px;width:64px;height:4px;background:#eeeff1"></div>
<div class="a" style="left:855px;top:500.3px;width:65px;height:2px;background:#fafafa"></div>
</div></body></html>
